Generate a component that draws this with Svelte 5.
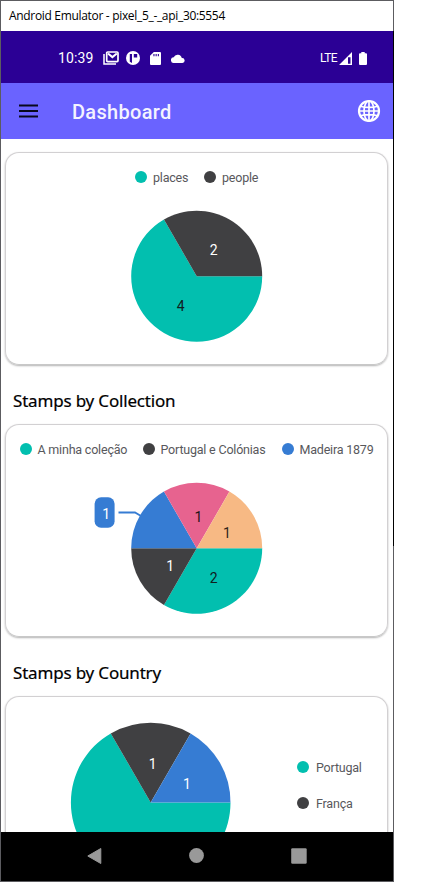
<script>
  const TEAL = '#02bfaf';
  const DARK = '#404042';
  const BLUE = '#367cd3';
  const PINK = '#e7638f';
  const PEACH = '#f7b984';

  // Angles are degrees clockwise from three o'clock.
  const overview = [
    { from: 0, to: 240, fill: TEAL, label: '4', x: 174.6, y: 110.3, ink: '#10201e' },
    { from: 240, to: 360, fill: DARK, label: '2', x: 207.6, y: 53.5, ink: '#fff' }
  ];
  const collections = [
    { from: 0, to: 120, fill: TEAL, label: '2', x: 207.6, y: 110.3, ink: '#10201e' },
    { from: 120, to: 180, fill: DARK, label: '1', x: 164.3, y: 98.3, ink: '#fff' },
    { from: 180, to: 240, fill: BLUE, label: '', x: 0, y: 0, ink: '#fff' },
    { from: 240, to: 300, fill: PINK, label: '1', x: 192.5, y: 49, ink: '#201418' },
    { from: 300, to: 360, fill: PEACH, label: '1', x: 221, y: 65, ink: '#30241a' }
  ];
  const countries = [
    { from: 0, to: 240, fill: TEAL, label: '', x: 0, y: 0, ink: '#fff' },
    { from: 240, to: 300, fill: DARK, label: '1', x: 146.7, y: 72, ink: '#fff' },
    { from: 300, to: 360, fill: BLUE, label: '1', x: 181, y: 92, ink: '#fff' }
  ];

  function wedge(cx, cy, r, from, to) {
    const point = (deg) => {
      const a = (deg * Math.PI) / 180;
      return `${(cx + r * Math.cos(a)).toFixed(2)} ${(cy + r * Math.sin(a)).toFixed(2)}`;
    };
    return `M${cx} ${cy}L${point(from)}A${r} ${r} 0 ${to - from > 180 ? 1 : 0} 1 ${point(to)}Z`;
  }
</script>

{#snippet pie(slices, cx, cy, r)}
  {#each slices as s}
    <path d={wedge(cx, cy, r, s.from, s.to)} fill={s.fill} />
  {/each}
  {#each slices as s}
    {#if s.label}
      <text x={s.x} y={s.y} fill={s.ink}>{s.label}</text>
    {/if}
  {/each}
{/snippet}

{#snippet key(color, name, width)}
  <span class="key">
    <svg width="12" height="12" viewBox="0 0 12 12"><circle cx="6" cy="6" r="6" fill={color} /></svg>
    <span class="name" style:width="{width}px">{name}</span>
  </span>
{/snippet}

<div class="window">
  <div class="titlebar">Android Emulator - pixel_5_-_api_30:5554</div>

  <div class="status">
    <span class="clock">10:39</span>
    <svg class="mail" width="16" height="14" viewBox="0 0 16 14">
      <path d="M1 3v10h12" fill="none" stroke="#fff" stroke-width="1.5" />
      <rect x="3.7" y="1" width="11.3" height="9.6" rx="1" fill="none" stroke="#fff" stroke-width="1.7" />
      <path d="M5 2.500l4.400 3.600 4.400-3.600" fill="none" stroke="#fff" stroke-width="2" />
    </svg>
    <svg class="disc" width="14" height="14" viewBox="0 0 14 14">
      <circle cx="7" cy="7" r="7" fill="#fff" />
      <path d="M3.800 3H6v9L3.800 10.800zM7.800 3h3.400v3.400H7.800z" fill="#2b0095" />
    </svg>
    <svg class="sd" width="11" height="13" viewBox="0 0 11 13">
      <path d="M3.8 0H10a1 1 0 0 1 1 1v11a1 1 0 0 1-1 1H1a1 1 0 0 1-1-1V3.8z" fill="#fff" />
      <path d="M3.4 2h1.1v2.2H3.4zM5.6 2h1.1v2.2H5.6zM7.8 2h1.100v2.200H7.800z" fill="#2b0095" />
    </svg>
    <svg class="cloud" width="14" height="9" viewBox="0 0 14 9">
      <path d="M3 9a2.9 2.9 0 0 1-.3-5.8A4.3 4.3 0 0 1 10.8 4 2.5 2.5 0 0 1 11.4 9z" fill="#fff" />
    </svg>
    <span class="lte">LTE</span>
    <svg class="signal" width="13" height="13" viewBox="0 0 13 13">
      <path fill-rule="evenodd" d="M13 0v13H0zM9 5.2v6.5h2.5V5.2z" fill="#fff" />
    </svg>
    <svg class="battery" width="8" height="13" viewBox="0 0 8 13">
      <path d="M2.3 0h3.4v1.300H7a1 1 0 0 1 1 1V12a1 1 0 0 1-1 1H1a1 1 0 0 1-1-1V2.300a1 1 0 0 1 1-1h1.300z" fill="#fff" />
    </svg>
  </div>

  <div class="appbar">
    <svg class="menu" width="19" height="14" viewBox="0 0 19 14">
      <path d="M0 1.500h19M0 7h19M0 12.500h19" stroke="#08081c" stroke-width="2" />
    </svg>
    <h1>Dashboard</h1>
    <svg class="globe" width="24" height="24" viewBox="0 0 24 24" fill="none" stroke="#fff">
      <circle cx="12" cy="12" r="10" stroke-width="2.200" />
      <ellipse cx="12" cy="12" rx="5" ry="10" stroke-width="1.700" />
      <path d="M12 1.500v21M1.500 12h21M3.200 7.200q8.800 2.400 17.600 0M3.200 16.800q8.800-2.400 17.600 0" stroke-width="1.700" />
    </svg>
  </div>

  <main>
    <section class="card">
      <div class="legend">
        {@render key(TEAL, 'places', 35)}
        {@render key(DARK, 'people', 36)}
      </div>
      <svg class="chart" width="381" height="162" viewBox="0 0 381 162">
        {@render pie(overview, 190.7, 75.2, 65.5)}
      </svg>
    </section>

    <h2>Stamps by Collection</h2>
    <section class="card">
      <div class="legend">
        {@render key(TEAL, 'A minha coleção', 89)}
        {@render key(DARK, 'Portugal e Colónias', 105)}
        {@render key(BLUE, 'Madeira 1879', 74)}
      </div>
      <svg class="chart" width="381" height="162" viewBox="0 0 381 162">
        {@render pie(collections, 190.7, 75.3, 65.5)}
        <path d="M112.500 39.500h16.500l6 3.500" fill="none" stroke={BLUE} stroke-width="1.800" />
        <rect x="88.600" y="24.300" width="20" height="30.400" rx="6.500" fill={BLUE} />
        <text x="100.300" y="45.800" fill="#fff">1</text>
      </svg>
    </section>

    <h2>Stamps by Country</h2>
    <section class="card side">
      <svg class="chart" width="291" height="210" viewBox="0 0 291 210">
        {@render pie(countries, 144.700, 105.500, 79.800)}
      </svg>
      <div class="column">
        {@render key(TEAL, 'Portugal', 46)}
        {@render key(DARK, 'França', 36)}
      </div>
    </section>
  </main>

  <div class="nav">
    <svg width="15" height="16" viewBox="0 0 15 16"><path d="M13.800.500v15L.800 8z" fill="#999" stroke="#999" stroke-linejoin="round" /></svg>
    <svg width="15" height="15" viewBox="0 0 15 15"><circle cx="7.500" cy="7.500" r="7.400" fill="#999" /></svg>
    <svg width="16" height="16" viewBox="0 0 16 16"><rect x=".200" y=".200" width="15.500" height="15.500" rx="1.200" fill="#999" /></svg>
  </div>
</div>

<style>
  :global(body) {
    background: #fff;
  }
  svg {
    display: block;
    flex: none;
  }
  .window {
    box-sizing: border-box;
    position: relative;
    width: 394px;
    height: 882px;
    border: 1px solid #5c5c60;
    display: flex;
    flex-direction: column;
    background: #fff;
    font-family: Roboto, sans-serif;
  }
  /* Darker stretch of the right-hand window edge. */
  .window::after {
    content: '';
    position: absolute;
    top: 30px;
    right: -1px;
    width: 1px;
    height: 515px;
    background: #000;
  }
  .titlebar {
    height: 30px;
    flex: none;
    padding-left: 8px;
    font: 12px/30px 'Open Sans', sans-serif;
    letter-spacing: -0.32px;
    color: #000;
    white-space: nowrap;
  }
  .status {
    height: 52px;
    flex: none;
    display: flex;
    align-items: center;
    padding-top: 2px;
    box-sizing: border-box;
    background: #2b0095;
    color: #fff;
  }
  .clock {
    width: 45px;
    margin-left: 57px;
    font-size: 14px;
    letter-spacing: 0.1px;
  }
  .disc {
    margin-left: 7px;
  }
  .sd {
    margin-left: 10px;
  }
  .cloud {
    margin-left: 10px;
  }
  .lte {
    margin-left: auto;
    width: 19px;
    font-size: 12px;
    letter-spacing: -0.6px;
  }
  .signal {
    margin-right: 7px;
  }
  .battery {
    margin-right: 26px;
  }
  .appbar {
    height: 56px;
    flex: none;
    display: flex;
    align-items: center;
    background: #6a63ff;
  }
  .menu {
    margin-left: 18px;
  }
  h1 {
    margin: 2px 0 0 34px;
    font-size: 20px;
    font-weight: 500;
    line-height: 24px;
    letter-spacing: 0.3px;
    color: #f4f3ff;
  }
  .globe {
    margin: 0 12px 0 auto;
  }
  main {
    height: 693px;
    flex: none;
    overflow: hidden;
    padding: 13px 4px 0;
    box-sizing: border-box;
  }
  .card {
    box-sizing: border-box;
    width: 383px;
    height: 213px;
    border: 1px solid #d2d0d2;
    border-bottom-color: #c8c8c8;
    border-radius: 14px;
    box-shadow: 0 1px 2px rgba(0, 0, 0, 0.3);
  }
  .legend {
    height: 48px;
    display: flex;
    justify-content: center;
    align-items: center;
    gap: 16px;
  }
  .key {
    display: flex;
    align-items: center;
    gap: 6px;
  }
  .name {
    font-size: 12.500px;
    letter-spacing: -0.2px;
    line-height: 16px;
    color: #58585c;
    white-space: nowrap;
    position: relative;
    top: 1px;
  }
  .chart text {
    font-size: 14px;
    text-anchor: middle;
  }
  h2 {
    margin: 0 0 0 8px;
    height: 59px;
    font: 400 17px/72px 'Noto Sans', sans-serif;
    color: #000;
    letter-spacing: -0.18px;
    -webkit-text-stroke: 0.2px #000;
    white-space: nowrap;
  }
  .side {
    display: flex;
  }
  .column {
    padding-top: 62px;
    display: flex;
    flex-direction: column;
    gap: 20px;
  }
  .column .key {
    gap: 7px;
  }
  .nav {
    height: 49px;
    flex: none;
    box-sizing: border-box;
    padding: 0 1px 2px 0;
    background: #000;
    display: flex;
    align-items: center;
    justify-content: center;
    gap: 87px;
  }
</style>
